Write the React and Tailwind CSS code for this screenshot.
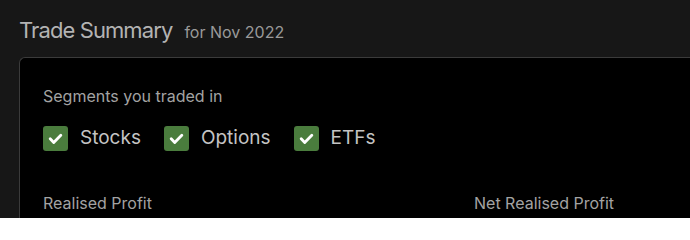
const segments = ['Stocks', 'Options', 'ETFs'];

function Check({ label }) {
  return (
    <label className="flex items-center gap-[12px]">
      <span className="flex h-[25px] w-[25px] items-center justify-center rounded-[3px] bg-[#4a7c3d]">
        <svg viewBox="0 0 24 24" className="h-[17px] w-[17px]" fill="none" stroke="white" strokeWidth="4" strokeLinecap="round" strokeLinejoin="round">
          <path d="M4.5 12.5l5 5 10-10" />
        </svg>
      </span>
      <span className="text-[19px] text-[#c4c4c4]">{label}</span>
    </label>
  );
}

export default function App() {
  return (
    <div className="h-[218px] w-[690px] overflow-hidden bg-[#171717] pl-[19px] pt-[14px] font-['Inter',sans-serif]">
      <div className="flex items-baseline gap-[12px]">
        <h1 className="text-[22px] tracking-[-0.9px] text-[#b3b3b3]">Trade Summary</h1>
        <span className="text-[16px] text-[#9a9a9a]">for Nov 2022</span>
      </div>

      <div className="mt-[10px] h-[300px] rounded-tl-[6px] border-l border-t border-[#3b3b3b] bg-black pl-[23px] pt-[26px]">
        <div className="text-[16px] text-[#a3a3a3]">Segments you traded in</div>
        <div className="mt-[16px] flex gap-[23px]">
          {segments.map((s) => (
            <Check key={s} label={s} />
          ))}
        </div>
        <div className="mt-[38px] grid grid-cols-[431px_1fr] text-[16px] text-[#a3a3a3]">
          <div>Realised Profit</div>
          <div>Net Realised Profit</div>
        </div>
      </div>
    </div>
  );
}
